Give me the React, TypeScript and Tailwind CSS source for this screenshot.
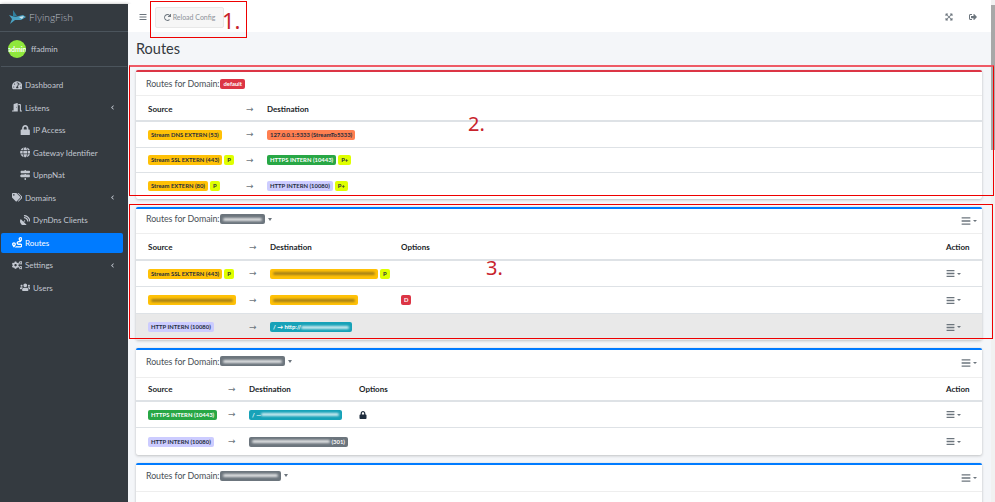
import type { ReactNode } from 'react';
import {
  FaBars,
  FaCogs,
  FaDoorOpen,
  FaExpandArrowsAlt,
  FaGlobe,
  FaLock,
  FaMapSigns,
  FaRedo,
  FaRoute,
  FaSatelliteDish,
  FaSignOutAlt,
  FaTachometerAlt,
  FaTags,
  FaUsers,
  FaChevronLeft,
} from 'react-icons/fa';

const font = 'font-["Lato",sans-serif]';

function NavItem({ icon, label, sub, caret, active }: { icon: ReactNode; label: string; sub?: boolean; caret?: boolean; active?: boolean }) {
  return (
    <div className={`flex items-center h-[20px] mb-[2.5px] rounded-[2px] w-[122px] ${sub ? 'pl-[18px]' : 'pl-[10px]'} ${active ? 'bg-[#007bff] text-white' : 'text-[#c2c7d0]'}`}>
      <span className="w-[12px] flex justify-center text-[10.5px] shrink-0">{icon}</span>
      <span className="ml-[2px] text-[8px] leading-none whitespace-nowrap">{label}</span>
      {caret && <FaChevronLeft className="ml-auto mr-[8px] text-[5px]" />}
    </div>
  );
}

function Sidebar() {
  return (
    <aside className="w-[128px] shrink-0 h-full bg-[#343a40] shadow-[1px_0_3px_rgba(0,0,0,0.3)]">
      <div className="h-[28px] flex items-center pl-[8px] border-b border-[#4b545c]">
        <svg width="18" height="16" viewBox="0 0 18 16" className="shrink-0">
          <path d="M1 5 L7 7 L15 5 L18 7 L13 10 L7 10 L2 14 L4 9 Z" fill="#4aa3c4" />
          <path d="M5 0 L9 6 L5 7 Z" fill="#2f7f9e" />
          <path d="M11 7 L16 6 L14 9 Z" fill="#cfe6ee" />
        </svg>
        <span className="ml-[3px] text-[10.2px] font-light text-[#b8bcc2]">FlyingFish</span>
      </div>
      <div className="h-[35px] mx-[1px] flex items-center pl-[7px] border-b border-[#4b545c]">
        <div className="w-[18px] h-[18px] rounded-full bg-[#8fe83c] flex items-center justify-center overflow-hidden text-[7px] font-bold text-white leading-none">admin</div>
        <span className="ml-[5px] text-[8px] text-[#c2c7d0]">ffadmin</span>
      </div>
      <nav className="pt-[8px] pl-[1px]">
        <NavItem icon={<FaTachometerAlt />} label="Dashboard" />
        <NavItem icon={<FaDoorOpen />} label="Listens" caret />
        <NavItem icon={<FaLock />} label="IP Access" sub />
        <NavItem icon={<FaGlobe />} label="Gateway Identifier" sub />
        <NavItem icon={<FaMapSigns />} label="UpnpNat" sub />
        <NavItem icon={<FaTags />} label="Domains" caret />
        <NavItem icon={<FaSatelliteDish />} label="DynDns Clients" sub />
        <NavItem icon={<FaRoute />} label="Routes" active />
        <NavItem icon={<FaCogs />} label="Settings" caret />
        <NavItem icon={<FaUsers />} label="Users" sub />
      </nav>
    </aside>
  );
}

function Badge({ color, children }: { color: string; children: ReactNode }) {
  return (
    <span className={`inline-flex items-center h-[10px] px-[3px] rounded-[2px] text-[5.9px] font-bold leading-none whitespace-nowrap ${color}`}>
      {children}
    </span>
  );
}

const warning = 'bg-[#ffc107] text-[#1f2d3d]';
const lime = 'bg-[#dfff00] text-[#1f2d3d]';
const lavender = 'bg-[#ccccff] text-[#1f2d3d]';
const green = 'bg-[#28a745] text-white';
const info = 'bg-[#17a2b8] text-white';
const grey = 'bg-[#6c757d] text-white';

// censored part of a domain name
function Smear({ w, color = 'bg-white/80' }: { w: number; color?: string }) {
  return <span className={`inline-block h-[3px] rounded-full blur-[0.8px] ${color}`} style={{ width: w }} />;
}

function ActionMenu() {
  return (
    <span className="flex items-center text-[#6c757d]">
      <FaBars className="text-[9px]" />
      <span className="ml-[2px] w-0 h-0 border-x-[2px] border-x-transparent border-t-[2px] border-t-[#6c757d]" />
    </span>
  );
}

function CardHeader({ title, menu, right, height }: { title: ReactNode; menu?: boolean; right?: boolean; height: string }) {
  return (
    <div className={`${height} pl-[10px] pr-[5px] flex items-center border-b border-[#eeeeee] text-[8.9px] tracking-[-0.1px] text-[#4a5158]`}>
      <span>Routes for Domain:</span>
      <span className="ml-[1px] flex items-center tracking-normal">{title}</span>
      {menu && <span className="ml-[3px] w-0 h-0 border-x-[2.5px] border-x-transparent border-t-[3px] border-t-[#6c757d]" />}
      {right && (
        <span className="ml-auto mt-[4px] flex items-center text-[#6c757d]">
          <FaBars className="text-[10px]" />
          <span className="ml-[2px] w-0 h-0 border-x-[2px] border-x-transparent border-t-[2px] border-t-[#6c757d]" />
        </span>
      )}
    </div>
  );
}

type Row = { cells: ReactNode[]; bg?: string };

function RouteTable({ cols, heads, rows, headHeight, rowHeight }: { cols: string; heads: string[]; rows: Row[]; headHeight: string; rowHeight: string }) {
  return (
    <div className="text-[#212529]">
      <div className={`grid ${cols} items-center ${headHeight} px-[12px] pt-[1px] border-b-2 border-[#dee2e6] text-[8px] font-bold`}>
        {heads.map((h, i) => (
          <div key={i}>{h === '→' ? arrow : h}</div>
        ))}
      </div>
      {rows.map((r, i) => (
        <div key={i} className={`grid ${cols} items-center ${rowHeight} px-[12px] pt-[1px] border-b border-[#dee2e6] last:border-b-0 ${r.bg ?? ''}`}>
          {r.cells.map((c, j) => (
            <div key={j} className="flex items-center gap-[2px]">{c}</div>
          ))}
        </div>
      ))}
    </div>
  );
}

const arrow = <span className='text-[9px] leading-none text-[#6c757d] font-normal font-["DejaVu_Sans",sans-serif]'>→</span>;

const cols1 = 'grid-cols-[98px_21px_1fr]';
const cols2 = 'grid-cols-[101px_21px_131px_1fr_24px]';
const cols3 = 'grid-cols-[80px_21px_110px_1fr_24px]';

function Card({ color, children }: { color: string; children: ReactNode }) {
  return <section className={`bg-white border-t-2 rounded-[2px] shadow-[0_0_1px_rgba(0,0,0,0.13),0_1px_3px_rgba(0,0,0,0.2)] ${color}`}>{children}</section>;
}

export default function App() {
  return (
    <div className={`relative w-[995px] h-[502px] overflow-hidden bg-white ${font}`}>
      <div className="h-[4px]" />
      <div className="flex h-[498px]">
        <Sidebar />
        <main className="flex-1 min-w-0 flex flex-col bg-[#f4f6f9]">
          <header className="h-[28px] shrink-0 bg-white flex items-center pl-[11px] pr-[14px] pb-[2px] text-[#6c757d]">
            <FaBars className="text-[8px]" />
            <button className="ml-[8px] w-[69px] h-[21px] bg-[#f6f6f6] border border-[#e8e8e8] rounded-[2px] flex items-center justify-center text-[7px] text-[#8c9299]">
              <FaRedo className="text-[7px] text-[#6c757d] mr-[2px]" />
              Reload Config
            </button>
            <FaExpandArrowsAlt className="ml-auto text-[8px]" />
            <FaSignOutAlt className="ml-[16px] text-[8px]" />
          </header>
          <div className="flex-1 min-h-0 overflow-hidden pl-[8px] pr-[9px]">
            <h1 className="h-[38px] pt-[7px] text-[14.5px] leading-[20px] text-[#343a40]">Routes</h1>
            <div className="flex flex-col gap-[8px]">
              <Card color="border-[#dc3545]">
                <CardHeader height="h-[24px]" title={<Badge color="bg-[#dc3545] text-white">default</Badge>} />
                <RouteTable
                  headHeight="h-[26px]"
                  rowHeight="h-[25.5px]"
                  cols={cols1}
                  heads={['Source', '→', 'Destination']}
                  rows={[
                    { cells: [<Badge color={warning}>Stream DNS EXTERN (53)</Badge>, arrow, <Badge color="bg-[#ff7f50] text-[#1f2d3d]">127.0.0.1:5333 (StreamTo5333)</Badge>] },
                    { cells: [<><Badge color={warning}>Stream SSL EXTERN (443)</Badge><Badge color={lime}>P</Badge></>, arrow, <><Badge color={green}>HTTPS INTERN (10443)</Badge><Badge color={lime}>P+</Badge></>] },
                    { cells: [<><Badge color={warning}>Stream EXTERN (80)</Badge><Badge color={lime}>P</Badge></>, arrow, <><Badge color={lavender}>HTTP INTERN (10080)</Badge><Badge color={lime}>P+</Badge></>] },
                  ]}
                />
              </Card>
              <Card color="border-[#007bff]">
                <CardHeader height="h-[25px] pb-[3px]" title={<Badge color={grey}><Smear w={39} /></Badge>} menu right />
                <RouteTable
                  headHeight="h-[27px]"
                  rowHeight="h-[26.5px]"
                  cols={cols2}
                  heads={['Source', '→', 'Destination', 'Options', 'Action']}
                  rows={[
                    { cells: [<><Badge color={warning}>Stream SSL EXTERN (443)</Badge><Badge color={lime}>P</Badge></>, arrow, <><Badge color={warning}><Smear w={102} color="bg-[#7a6320]/70" /></Badge><Badge color={lime}>P</Badge></>, null, <ActionMenu />] },
                    { cells: [<Badge color={warning}><Smear w={82} color="bg-[#7a6320]/70" /></Badge>, arrow, <Badge color={warning}><Smear w={82} color="bg-[#7a6320]/70" /></Badge>, <Badge color="bg-[#dc3545] text-white">D</Badge>, <ActionMenu />] },
                    { cells: [<Badge color={lavender}>HTTP INTERN (10080)</Badge>, arrow, <Badge color={info}>/ → http://<Smear w={48} /></Badge>, null, <ActionMenu />], bg: 'bg-[#e9e9e9]' },
                  ]}
                />
              </Card>
              <Card color="border-[#007bff]">
                <CardHeader height="h-[27.5px] pb-[4px]" title={<Badge color={grey}><Smear w={59} /></Badge>} menu right />
                <RouteTable
                  headHeight="h-[24px]"
                  rowHeight="h-[26.5px]"
                  cols={cols3}
                  heads={['Source', '→', 'Destination', 'Options', 'Action']}
                  rows={[
                    { cells: [<Badge color={green}>HTTPS INTERN (10443)</Badge>, arrow, <Badge color={info}>/ —<Smear w={78} /></Badge>, <FaLock className="text-[8px] text-[#1f2d3d]" />, <ActionMenu />] },
                    { cells: [<Badge color={lavender}>HTTP INTERN (10080)</Badge>, arrow, <Badge color={grey}><Smear w={78} />&nbsp;(301)</Badge>, null, <ActionMenu />] },
                  ]}
                />
              </Card>
              <Card color="border-[#007bff]">
                <CardHeader height="h-[27.5px] pb-[4px]" title={<Badge color={grey}><Smear w={55} /></Badge>} menu right />
                <div className="h-[40px]" />
              </Card>
            </div>
          </div>
        </main>
        <div className="w-[4px] shrink-0 bg-[#f1f1f1] -mt-[4px]">
          <div className="mt-[5px] h-[145px] bg-[#a8a8a8]" />
        </div>
      </div>

      {/* annotations drawn on top of the screenshot */}
      <div className="absolute left-[150px] top-[1px] w-[97px] h-[37px] border border-[#ee0000]" />
      <div className="absolute left-[129px] top-[65px] w-[865px] h-[131px] border border-[#ee0000] border-t-2 border-t-[#ee5a66]" />
      <div className="absolute left-[129px] top-[204px] w-[864px] h-[135px] border border-[#ee0000]" />
      <span className='absolute left-[222px] top-[5px] text-[22px] leading-[30px] text-[#c8232c] font-["Noto_Sans",sans-serif]'>1.</span>
      <span className='absolute left-[468px] top-[110px] text-[20px] leading-[28px] text-[#c8232c] font-["Noto_Sans",sans-serif]'>2.</span>
      <span className='absolute left-[486px] top-[254px] text-[20px] leading-[28px] text-[#c8232c] font-["Noto_Sans",sans-serif]'>3.</span>
    </div>
  );
}
